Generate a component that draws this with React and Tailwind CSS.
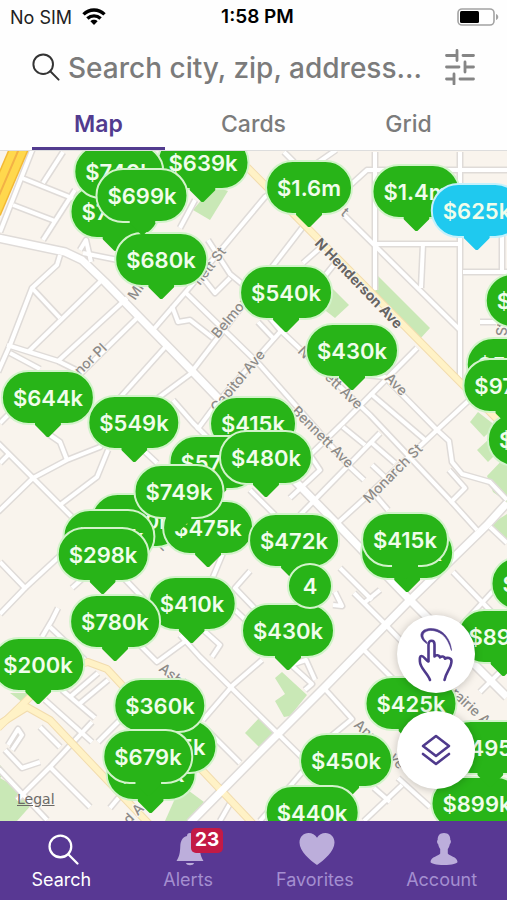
import React from "react";

const MINOR_ROADS = [
  "M33 148 L0 232",
  "M13 205 L55 221",
  "M22 178 L77 200",
  "M43 240 L75 190",
  "M63 152 L43 183",
  "M60 255 L57 265 L32 288 L10 345 L-2 372",
  "M32 288 L60 318",
  "M28 352 L103 279",
  "M127 298 L57 362",
  "M137 318 L66 388",
  "M167 345 L100 420",
  "M193 372 L158 398",
  "M7 345 L58 361 L80 372",
  "M10 353 L40 369",
  "M80 250 L86 240 L91 262",
  "M83 253 L118 260",
  "M153 330 L190 287 L265 197 L300 175 L336 150",
  "M180 228 L195 200",
  "M208 240 L230 274 L262 300",
  "M230 278 L215 293 L203 278",
  "M185 292 L260 365 L350 467 L364 480",
  "M193 370 L302 228",
  "M172 306 L178 322 L190 320 L213 338",
  "M303 263 L320 248",
  "M284 152 L294 162",
  "M375 152 L375 290",
  "M460 152 L460 380",
  "M345 190 L367 170 L507 170",
  "M344 215 L460 330",
  "M377 244 L460 244",
  "M423 244 L421 288",
  "M463 272 L507 272",
  "M502 235 L502 272",
  "M480 322 L496 322",
  "M197 430 L217 403 L280 332 L336 262",
  "M258 322 L275 340",
  "M255 300 L280 330 L370 415 L450 500 L477 530",
  "M365 375 L385 377 L437 430 L449 441 L452 462 L462 474 L490 482 L507 500",
  "M370 393 L425 440",
  "M343 427 L365 445",
  "M372 443 L395 463",
  "M417 348 L343 423 L310 455 L320 470 L290 498",
  "M507 365 L437 430 L363 500 L330 530",
  "M380 433 L300 515",
  "M372 465 L388 480",
  "M450 503 L465 488 L449 470",
  "M376 496 L388 510",
  "M490 527 L507 543",
  "M453 572 L507 628",
  "M503 580 L460 627",
  "M480 692 L507 665",
  "M-2 443 L33 478 L75 520",
  "M-2 512 L33 478 L67 460 L100 447 L118 422",
  "M67 460 L60 442 L47 433",
  "M60 505 L97 477 L108 450",
  "M0 463 L10 453",
  "M0 423 L9 414",
  "M0 562 L25 588 L0 614",
  "M25 588 L64 552",
  "M72 588 L90 572",
  "M120 574 L160 616",
  "M138 643 L157 662 L187 640",
  "M173 400 L193 423 L213 443",
  "M143 450 L157 463",
  "M213 577 L223 553",
  "M250 571 L235 588 L258 612",
  "M310 548 L320 560 L312 570 L326 584",
  "M340 568 L360 588 L372 600",
  "M250 490 L275 515",
  "M50 627 L85 660",
  "M42 637 L52 620 L58 608",
  "M45 700 L92 742",
  "M62 690 L95 718",
  "M70 697 L98 673",
  "M78 705 L108 680",
  "M98 742 L125 715",
  "M92 722 L50 767 L17 800",
  "M50 767 L90 807",
  "M40 727 L60 747",
  "M5 750 L22 768 L40 762",
  "M8 745 L18 729 L22 735 L12 750",
  "M-2 768 L47 820",
  "M180 635 L200 657 L330 785",
  "M200 627 L220 645 L212 657",
  "M235 610 L258 632",
  "M262 660 L233 685 L203 720",
  "M207 730 L240 763",
  "M110 808 L125 790",
  "M220 821 L232 800",
  "M324 688 L352 719 L330 737",
  "M288 662 L312 684 L305 690",
  "M294 664 L306 660 L315 680",
  "M364 650 L402 688",
  "M354 593 L384 623",
  "M364 603 L380 590",
  "M384 623 L410 650",
  "M304 770 L260 821",
  "M402 785 L364 821",
  "M374 788 L390 802",
  "M398 778 L430 807",
  "M335 592 L342 606 L333 605",
];

const MAJOR_ROADS = [
  "M-2 238 L65 252 L82 260 L105 282 L193 372 L217 397 L297 483 L340 527 L410 600 L507 697",
  "M507 503 L487 525 L410 600 L324 688 L262 750 L190 823",
];

const AVENUES = [
  "M247 167 L460 382 L510 432",
  "M-2 725 L27 707 L50 720 L107 780 L150 825",
  "M-2 728 L30 697 L70 667 L88 662 L107 669 L133 697 L200 768 L254 825",
];

const PARKS = [
  "193,210 210,220 228,191 213,186",
  "377,275 430,328 419,340 375,295",
  "330,286 349,305 335,318 322,308",
  "478,412 470,422 484,437 496,426",
  "477,450 488,440 500,450 488,462",
  "487,476 507,455 507,502 493,492",
  "491,524 507,514 507,540",
  "282,672 307,695 290,716 284,717 275,701 285,694 275,678",
  "260,717 274,732 259,747 245,733",
  "181,785 204,802 190,821 165,821",
  "0,778 18,788 33,803 17,821 0,821",
  "10,693 28,693 22,702",
  "0,765 6,772 0,778",
];

const STREETS = [
  { text: "Mi", x: 135, y: 301, angle: -55 },
  { text: "nett St", x: 200, y: 286, angle: -52 },
  { text: "Belmont", x: 218, y: 339, angle: -50 },
  { text: "nor Pl", x: 80, y: 376, angle: -44 },
  { text: "Capitol Ave", x: 217, y: 413, angle: -50 },
  { text: "t", x: 340, y: 214, angle: 42 },
  { text: "N", x: 297, y: 352, angle: 45 },
  { text: "ett Ave", x: 324, y: 378, angle: 44 },
  { text: "Ave", x: 384, y: 379, angle: 45 },
  { text: "Bennett Ave", x: 291, y: 412, angle: 45 },
  { text: "Monarch St", x: 369, y: 504, angle: -45 },
  { text: "Ashby", x: 158, y: 670, angle: 38 },
  { text: "Annex", x: 353, y: 726, angle: 42 },
  { text: "ve", x: 389, y: 757, angle: 55 },
  { text: "rairie A", x: 450, y: 694, angle: 43 },
  { text: "nd A", x: 123, y: 831, angle: -45 },
  { text: "L", x: 158, y: 546, angle: 45 },
  { text: "St", x: 507, y: 336, angle: -90 },
];

const MARKERS = [
  { price: "$639k", x: 203, y: 136 },
  { price: "$725k", x: 115, y: 185 },
  { price: "$740k", x: 119, y: 145 },
  { price: "$680k", x: 161, y: 233 },
  { price: "$699k", x: 142, y: 169 },
  { price: "$1.6m", x: 309, y: 161 },
  { price: "$1.4m", x: 416, y: 165 },
  { price: "$625k", x: 477, y: 184, active: true },
  { price: "$540k", x: 286, y: 266 },
  { price: "$430k", x: 352, y: 324 },
  { price: "$510k", x: 529, y: 274 },
  { price: "$535k", x: 512, y: 338 },
  { price: "$525k", x: 533, y: 413 },
  { price: "$970k", x: 508, y: 359 },
  { price: "$644k", x: 48, y: 371 },
  { price: "$549k", x: 134, y: 396 },
  { price: "$415k", x: 253, y: 397 },
  { price: "$575k", x: 214, y: 436 },
  { price: "$480k", x: 266, y: 431 },
  { price: "$500k", x: 137, y: 494 },
  { price: "$475k", x: 208, y: 501 },
  { price: "$749k", x: 179, y: 465 },
  { price: "$350k", x: 109, y: 510 },
  { price: "$298k", x: 103, y: 528 },
  { price: "$472k", x: 294, y: 514 },
  { price: "$420k", x: 407, y: 526 },
  { price: "$415k", x: 405, y: 513 },
  { price: "$410k", x: 192, y: 577 },
  { price: "$780k", x: 115, y: 595 },
  { price: "$430k", x: 288, y: 604 },
  { price: "$550k", x: 537, y: 557 },
  { price: "$200k", x: 38, y: 638 },
  { price: "$899k", x: 503, y: 610 },
  { price: "$745k", x: 151, y: 747 },
  { price: "$375k", x: 172, y: 720 },
  { price: "$360k", x: 160, y: 679 },
  { price: "$679k", x: 148, y: 730 },
  { price: "$425k", x: 411, y: 677 },
  { price: "$450k", x: 346, y: 734 },
  { price: "$440k", x: 312, y: 786 },
  { price: "$899k", x: 477, y: 777 },
  { price: "$495k", x: 490, y: 721 },
];

const MAP_TOP = 152;

function StreetMap() {
  return (
    <svg
      className="absolute inset-0 h-full w-full"
      viewBox="0 151 507 670"
      preserveAspectRatio="xMinYMin slice"
      fill="none"
      aria-hidden="true"
    >
      <rect x="0" y="151" width="507" height="670" fill="#f9f4ed" />
      {PARKS.map((p) => (
        <polygon key={p} points={p} fill="#c9e8b6" />
      ))}
      <g stroke="#dfdbd8" strokeWidth="7" strokeLinejoin="round">
        {MINOR_ROADS.map((d) => <path key={d} d={d} />)}
      </g>
      <g stroke="#dfdbd8" strokeWidth="10" strokeLinejoin="round">
        {MAJOR_ROADS.map((d) => <path key={d} d={d} />)}
      </g>
      <g stroke="#ffffff" strokeWidth="4" strokeLinejoin="round">
        {MINOR_ROADS.map((d) => <path key={d} d={d} />)}
      </g>
      <g stroke="#f2dcae" strokeWidth="8" strokeLinejoin="round">
        {AVENUES.map((d) => <path key={d} d={d} />)}
      </g>
      <g stroke="#fff2c6" strokeWidth="6" strokeLinejoin="round">
        {AVENUES.map((d) => <path key={d} d={d} />)}
      </g>
      <g stroke="#ffffff" strokeWidth="7" strokeLinejoin="round">
        {MAJOR_ROADS.map((d) => <path key={d} d={d} />)}
      </g>
      <path d="M24 137 L-8 212" stroke="#f3b935" strokeWidth="19" />
      <path d="M24 137 L-8 212" stroke="#ffd84d" strokeWidth="16" />
      <path d="M24 137 L-8 212" stroke="#f3b146" strokeWidth="2" />
      <g
        fontFamily="Inter, 'Liberation Sans', sans-serif"
        fill="#8d8b88"
        stroke="#faf6f0"
        strokeWidth="2"
        paintOrder="stroke"
        fontSize="14"
        fontWeight="500"
      >
        {STREETS.map((s) => (
          <text
            key={s.text + s.x}
            x={s.x}
            y={s.y}
            transform={`rotate(${s.angle} ${s.x} ${s.y})`}
          >
            {s.text}
          </text>
        ))}
        <text x="314" y="244" transform="rotate(46 314 244)" fill="#666462" fontSize="14" fontWeight="700">
          N Henderson Ave
        </text>
      </g>
    </svg>
  );
}

function Marker({ price, x, y, active }) {
  const tone = active
    ? "border-[#c5f1fb] bg-[#1fc9ef]"
    : "border-[#d2f3ca] bg-[#28b418]";
  return (
    <button
      type="button"
      className={`absolute flex h-[55px] -translate-x-1/2 items-center justify-center rounded-full border-2 px-2.5 text-[22px] leading-none font-semibold whitespace-nowrap text-[#f0fdeb] ${tone}`}
      style={{ left: x, top: y - MAP_TOP }}
    >
      {price}
      <svg
        className="absolute top-[50px] left-1/2 h-[15px] w-[26px] -translate-x-1/2"
        viewBox="0 0 26 15"
        aria-hidden="true"
      >
        <path d="M0 0 H26 V3 L14.5 14.5 Q13 16 11.5 14.5 L0 3 Z" fill={active ? "#1fc9ef" : "#28b418"} />
      </svg>
    </button>
  );
}

function StatusBar() {
  return (
    <div className="grid h-[34px] grid-cols-3 items-center pr-0.5 pl-2.5 text-[18px] text-[#222]">
      <div className="flex items-center gap-2.5">
        <span>No SIM</span>
        <svg width="24" height="18" viewBox="0 0 24 18" fill="none" stroke="#000" strokeWidth="3.4" aria-label="Wi-Fi">
          <path d="M1.5 6.4 C7.5 0.5 16.5 0.5 22.5 6.4" />
          <path d="M5.4 10.6 C9.2 7 14.8 7 18.6 10.6" />
          <path d="M12 17 L8.4 13.2 C10.4 11.4 13.6 11.4 15.6 13.2 Z" fill="#000" stroke="none" />
        </svg>
      </div>
      <span className="text-center text-[19px] font-semibold whitespace-nowrap text-black">1:58 PM</span>
      <svg className="mr-1.5 justify-self-end" width="42" height="18" viewBox="0 0 42 18" aria-label="Battery">
        <rect x="1" y="1" width="36" height="16" rx="4" fill="#fff" stroke="#a3a3a3" strokeWidth="1.6" />
        <rect x="3" y="3" width="19" height="12" rx="1.5" fill="#000" />
        <path d="M39 6 C42 7 42 11 39 12 Z" fill="#a3a3a3" />
      </svg>
    </div>
  );
}

function SearchIcon({ size, width }) {
  return (
    <svg
      width={size}
      height={size}
      viewBox="0 0 30 30"
      fill="none"
      stroke="currentColor"
      strokeWidth={width}
      strokeLinecap="round"
      aria-hidden="true"
    >
      <circle cx="12" cy="12" r="10.5" />
      <path d="M19.6 19.6 L28.5 28.5" />
    </svg>
  );
}

function SearchRow() {
  return (
    <form className="flex h-[66px] items-center gap-2 px-8" role="search" onSubmit={(e) => e.preventDefault()}>
      <label htmlFor="place" className="shrink-0 text-[#333]" aria-label="Search">
        <SearchIcon size={28} width={2.1} />
      </label>
      <input
        id="place"
        type="text"
        placeholder="Search city, zip, address..."
        className="min-w-0 flex-1 bg-transparent pt-0.5 text-[28px] font-medium text-[#333] outline-none placeholder:text-[#7b7b7b]"
      />
      <button type="button" aria-label="Filters" className="shrink-0">
        <svg width="30" height="36" viewBox="0 0 30 36" stroke="#858585" strokeWidth="2.8" strokeLinecap="round" aria-hidden="true">
          <path d="M1.5 6.5 H12 M12 1.5 V11.5 M18 6.5 H28.5" />
          <path d="M1.5 18 H14 M20 13 V23 M20 18 H28.5" />
          <path d="M1.5 30 H9 M9 25 V35 M15 30 H28.5" />
        </svg>
      </button>
    </form>
  );
}

function Tabs() {
  const idle = "h-[50px] flex-1 border-b-3 border-transparent pt-0.5 text-[#7b7b7b]";
  return (
    <div role="tablist" className="flex gap-[22px] border-b border-[#dddddd] px-8 text-[23px] font-medium">
      <button
        type="button"
        role="tab"
        aria-selected="true"
        className="h-[50px] flex-1 border-b-3 border-[#523b8f] pt-0.5 font-semibold text-[#523b8f]"
      >
        Map
      </button>
      <button type="button" role="tab" aria-selected="false" className={idle}>Cards</button>
      <button type="button" role="tab" aria-selected="false" className={idle}>Grid</button>
    </div>
  );
}

function MapControls() {
  const round = "flex size-[78px] items-center justify-center rounded-full bg-white shadow-[0_1px_8px_rgba(0,0,0,0.22)]";
  return (
    <div className="absolute right-8 bottom-8 flex flex-col gap-[18px]">
      <button type="button" aria-label="Draw area" className={round}>
        <svg width="36" height="56" viewBox="0 0 36 56" fill="none" stroke="#4f3a8c" strokeLinecap="round" strokeLinejoin="round" aria-hidden="true">
          <path
            d="M8.5 17.5 C2 13 1 7 6 4 C13 0.5 23 3 28 10 C31.5 14.5 33 19 33.5 24.5 C31 17 29 12.5 24 8.3 C18.5 4 10.5 3.2 6.8 6.3 C3.8 9 4.8 12.5 9 16.2 Z"
            fill="#4f3a8c"
            strokeWidth="0.6"
          />
          <path
            strokeWidth="2.6"
            d="M12 54 C9.5 47 2 42 1.9 35.5 C1.6 32 2 30 3.5 30 C6 30 7.5 34 10.5 35.5 V18.5 C10.5 13.5 16.5 13.5 16.5 18.5 V30.5 C18 28.5 21.5 29 22 31.5 C23.5 29.8 26.5 30.2 27 32.7 C29 31 33.5 32 33.5 35 C33.5 42 28 46 26.5 54"
          />
        </svg>
      </button>
      <button type="button" aria-label="Map layers" className={round}>
        <svg width="30" height="32" viewBox="0 0 30 32" fill="none" stroke="#4f3a8c" strokeWidth="2.6" strokeLinejoin="round" strokeLinecap="round" aria-hidden="true">
          <path d="M15 2 L28 12 L15 22 L2 12 Z" />
          <path d="M2 20 L15 30 L28 20" />
        </svg>
      </button>
    </div>
  );
}

function BellIcon() {
  return (
    <svg width="28" height="33" viewBox="0 0 28 33" fill="currentColor" aria-hidden="true">
      <path d="M14 0 C16 0 17 1.3 17 3 C21.5 4.2 23.5 8 23.7 13 C24 20 24.5 23 27.5 28 H0.5 C3.5 23 4 20 4.3 13 C4.5 8 6.5 4.2 11 3 C11 1.3 12 0 14 0 Z" />
      <path d="M10 30 H18 C17.5 33 10.5 33 10 30 Z" />
    </svg>
  );
}

function HeartIcon() {
  return (
    <svg width="36" height="32" viewBox="0 0 36 32" fill="currentColor" aria-hidden="true">
      <path d="M18 32 C11 27 0.5 18.5 0.5 9.5 C0.5 4 4.5 0 9.5 0 C13 0 16.3 1.8 18 4.8 C19.7 1.8 23 0 26.5 0 C31.5 0 35.5 4 35.5 9.5 C35.5 18.5 25 27 18 32 Z" />
    </svg>
  );
}

function PersonIcon() {
  return (
    <svg width="28" height="32" viewBox="0 0 28 32" fill="currentColor" aria-hidden="true">
      <path d="M14 0 C18.5 0 20.5 2.8 20.3 7 C21.3 7.3 21 10.5 19.8 11.2 C19.3 13.8 18.5 15 17.8 16 V20.5 C18.5 23 27.5 23.5 27.5 29 C27.5 30.5 22 32 14 32 C6 32 0.5 30.5 0.5 29 C0.5 23.5 9.5 23 10.2 20.5 V16 C9.5 15 8.7 13.8 8.2 11.2 C7 10.5 6.7 7.3 7.7 7 C7.5 2.8 9.5 0 14 0 Z" />
    </svg>
  );
}

function NavItem({ label, current, badge, children }) {
  return (
    <button
      type="button"
      aria-current={current ? "page" : undefined}
      className={`flex flex-1 flex-col items-center pt-3 ${current ? "text-white" : "text-[#bcaedb]"}`}
    >
      <span className="relative flex h-8 items-center">
        {children}
        {badge && (
          <span className="absolute -top-[5px] left-[15px] flex h-[25px] w-8 items-center justify-center rounded-[5px] bg-[#c31a45] text-[19px] font-bold text-white">
            {badge}
          </span>
        )}
      </span>
      <span className={`pt-0.5 pr-1 text-[18px] leading-[26px] ${current ? "text-white" : "text-[#a48fd0]"}`}>{label}</span>
    </button>
  );
}

export default function App() {
  return (
    <div className="flex min-h-screen flex-col bg-white font-[Inter,'Liberation_Sans',sans-serif]">
      <header className="bg-[#fefefe]">
        <StatusBar />
        <SearchRow />
        <Tabs />
      </header>
      <main className="relative flex-1 overflow-hidden bg-[#f9f4ed]">
        <StreetMap />
        {MARKERS.map((m) => (
          <Marker key={`${m.x}-${m.y}`} {...m} />
        ))}
        <button
          type="button"
          className="absolute top-[412px] left-[287px] flex size-[46px] items-center justify-center rounded-full border-2 border-[#d2f3ca] bg-[#28b418] text-[22px] font-semibold text-[#f0fdeb]"
        >
          4
        </button>
        <a
          href="#legal"
          className="absolute bottom-3 left-[17px] font-['DejaVu_Sans',sans-serif] text-[14px] leading-5 text-[#6b6966] underline"
        >
          Legal
        </a>
        <MapControls />
      </main>
      <nav className="flex h-[79px] bg-[#583893]">
        <NavItem label="Search" current>
          <SearchIcon size={31} width={2.2} />
        </NavItem>
        <NavItem label="Alerts" badge="23">
          <BellIcon />
        </NavItem>
        <NavItem label="Favorites">
          <HeartIcon />
        </NavItem>
        <NavItem label="Account">
          <PersonIcon />
        </NavItem>
      </nav>
    </div>
  );
}
